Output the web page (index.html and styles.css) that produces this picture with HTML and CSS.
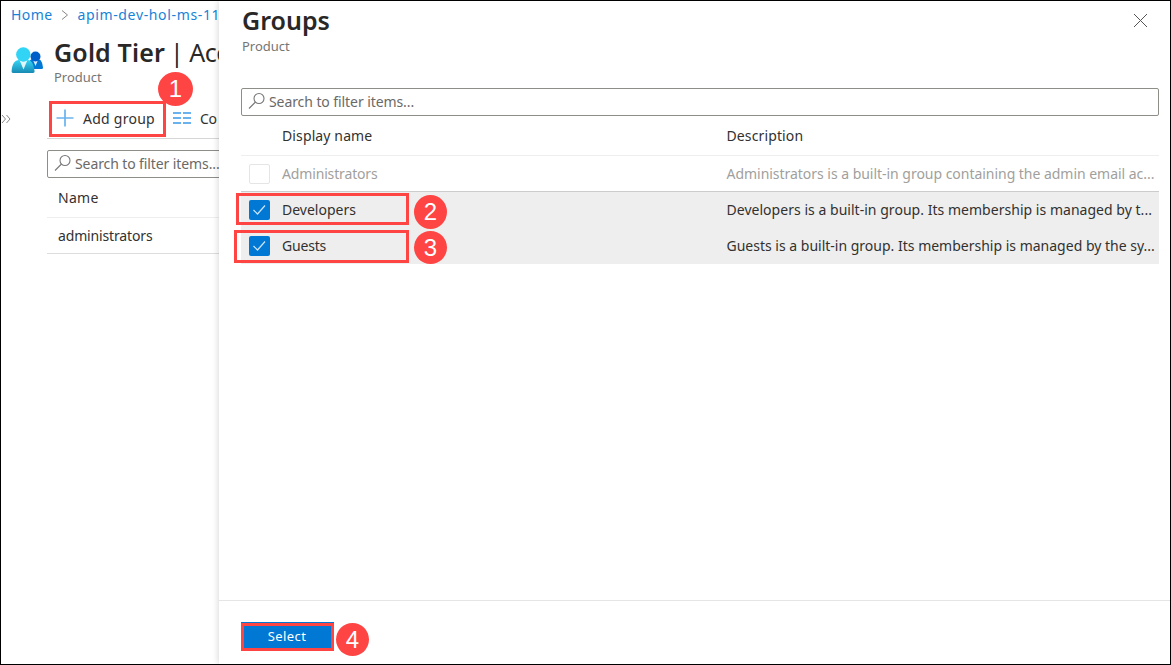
FILE: index.html
```html
<!DOCTYPE html>
<html lang="en">
<head>
<meta charset="utf-8">
<title>Groups</title>
<link rel="stylesheet" href="styles.css">
</head>
<body>
<div class="portal">
  <main class="blade">
    <nav class="breadcrumb"><a>Home</a><svg class="crumb-arrow" width="8" height="10" viewBox="0 0 8 10"><path d="M1 .5 6.500 5 1 9.500"/></svg><a class="crumb-service">apim-dev-hol-ms-11</a></nav>
    <header class="blade-header">
      <svg class="people" width="33" height="28" viewBox="0 0 33 28">
        <defs><linearGradient id="front" x1="0" y1="0" x2="0" y2="1"><stop offset="0" stop-color="#32d4f5"/><stop offset="1" stop-color="#198ab3"/></linearGradient></defs>
        <path d="M18 22h12.500q1.700 0 1.500-1.500c-.6-5-2-8.500-5.500-8.500h-5q-3 0-3.500 5z" fill="#0078d4"/>
        <path d="M22 13l2.500 6 2.500-6q-2.500 1.500-5 0z" fill="#d9ecfb"/>
        <circle cx="24.500" cy="9.500" r="5" fill="#005ec8"/>
        <path d="M2 26h20q1.800 0 1.600-1.800C22.800 17 20.500 13 17 13H8C3.500 13 1.200 17 .6 24.200Q.4 26 2 26z" fill="url(#front)"/>
        <path d="M8.500 13l4 9.500 4-9.500q-4 2.500-8 0z" fill="#fff" opacity=".85"/>
        <circle cx="12.300" cy="7.500" r="7.200" fill="#32d4f5"/>
      </svg>
      <div>
        <h1 class="title"><b>Gold Tier</b><span class="title-section">| Acc</span></h1>
        <p class="subtitle">Product</p>
      </div>
    </header>
    <div class="blade-body">
      <span class="expand"><svg width="10" height="10" viewBox="0 0 10 10"><path d="M1 1l3.500 4L1 9M5.500 1 9 5 5.500 9"/></svg></span>
      <div class="content">
        <div class="toolbar">
          <div class="add-group"><svg width="18" height="18" viewBox="0 0 18 18"><path d="M9 .5v17M.5 9h17"/></svg><span>Add group</span></div>
          <svg class="columns" width="18" height="12" viewBox="0 0 18 12"><path d="M0 1h8M10 1h8M0 6h8M10 6h8M0 11h8M10 11h8"/></svg>
          <span class="columns-label">Co</span>
        </div>
        <div class="search blade-search"><svg class="magnifier" width="18" height="18" viewBox="0 0 18 18"><circle cx="11" cy="6.500" r="5"/><path d="M7.500 10 1 16.500"/></svg><span>Search to filter items...</span></div>
        <div class="name-head">Name</div>
        <div class="name-row">administrators</div>
      </div>
    </div>
  </main>
  <aside class="panel">
    <header class="panel-header">
      <div><h2 class="panel-title">Groups</h2><p class="subtitle">Product</p></div>
      <svg class="close" width="15" height="15" viewBox="0 0 15 15"><path d="M1 1l13 13M14 1 1 14"/></svg>
    </header>
    <div class="search"><svg class="magnifier" width="18" height="18" viewBox="0 0 18 18"><circle cx="11" cy="6.500" r="5"/><path d="M7.500 10 1 16.500"/></svg><span>Search to filter items...</span></div>
    <div class="table">
      <div class="row head"><span></span><span>Display name</span><span>Description</span></div>
      <div class="row disabled"><i class="box"></i><span class="c-admin">Administrators</span><span class="d-admin">Administrators is a built-in group containing the admin email ac...</span></div>
      <div class="row selected"><i class="box on"><svg width="21" height="20" viewBox="0 0 21 20"><path d="M4.500 10 8.500 14 16 5.500"/></svg></i><span>Developers</span><span class="d-dev">Developers is a built-in group. Its membership is managed by t...</span></div>
      <div class="row selected"><i class="box on"><svg width="21" height="20" viewBox="0 0 21 20"><path d="M4.500 10 8.500 14 16 5.500"/></svg></i><span class="c-guest">Guests</span><span class="d-guest">Guests is a built-in group. Its membership is managed by the sy...</span></div>
    </div>
    <footer class="panel-footer"><button class="select">Select</button></footer>
  </aside>
  <div class="mark mark-add"></div>
  <div class="mark mark-dev"></div>
  <div class="mark mark-guest"></div>
  <div class="mark mark-select"></div>
  <div class="badge b1">1</div>
  <div class="badge b2">2</div>
  <div class="badge b3">3</div>
  <div class="badge b4">4</div>
</div>
</body>
</html>
```
FILE: styles.css
```css
* { box-sizing: border-box; }
body { margin: 0; font: 14px/20px "Noto Sans", sans-serif; color: #323130; }
h1, h2, p { margin: 0; font-weight: 400; }
svg { display: block; flex: none; fill: none; }
.portal { position: relative; display: flex; width: 1171px; height: 665px; border: 1px solid #000; background: #fff; overflow: hidden; white-space: nowrap; }
.blade { width: 218px; flex: none; overflow: hidden; }
.breadcrumb { display: flex; align-items: center; height: 27px; padding-left: 10px; color: #1683d8; letter-spacing: .4px; }
.crumb-service { letter-spacing: .65px; }
.crumb-arrow { margin: 0 8px 0 9px; stroke: #8a8886; }
.blade-header { display: flex; height: 73px; padding: 8px 0 0 10px; }
.people { margin: 11px 10px 0 0; }
.title { font-size: 25px; line-height: 32px; color: #292827; }
.title b { font-weight: 600; letter-spacing: .15px; }
.title-section { margin-left: 5px; letter-spacing: -.5px; }
.subtitle { font-size: 13px; line-height: 18px; color: #767574; }
.blade-body { display: flex; }
.expand { width: 46px; padding: 13px 0 0 0; flex: none; stroke: #8a8886; }
.content { width: 400px; flex: none; }
.toolbar { display: flex; align-items: center; height: 38px; border-bottom: 1px solid #d6d6d6; }
.add-group { display: flex; align-items: center; width: 126px; padding-left: 9px; gap: 9px; letter-spacing: .25px; }
.add-group span, .columns-label { margin-top: -1px; }
.add-group svg { stroke: #69b2ed; stroke-width: 1.700; margin-top: -3px; }
.columns { stroke: #69b2ed; stroke-width: 2; margin-top: -3px; }
.columns-label { margin-left: 9px; letter-spacing: -.3px; }
.search { display: flex; align-items: center; height: 28px; border: 1px solid #8e8e88; border-radius: 2px; padding-left: 6px; gap: 3px; color: #6b6967; letter-spacing: -.08px; }
.magnifier { stroke: #777; stroke-width: 1.1; margin-top: -3px; }
.blade-search { margin-top: 11px; letter-spacing: -.1px; }
.name-head { height: 40px; padding: 10px 0 0 11px; border-bottom: 1px solid #eee; letter-spacing: .3px; }
.name-row { height: 36px; padding: 8px 0 0 11px; border-bottom: 1px solid #ddd; letter-spacing: -.15px; }
.panel { display: flex; flex-direction: column; flex: 1; min-width: 0; padding: 0 11px 0 22px; box-shadow: -1px 0 6px rgba(0,0,0,.15); background: #fff; z-index: 1; }
.panel-header { display: flex; justify-content: space-between; height: 87px; padding: 3px 0 0 1px; }
.panel-title { font-size: 25px; font-weight: 600; line-height: 33px; color: #292827; }
.close { margin: 9px 11px 0 0; stroke: #555; }
.row { display: grid; grid-template-columns: 41px 444.500px 1fr; align-items: center; height: 36px; padding-right: 3px; }
.head { height: 40px; border-bottom: 1px solid #eee; letter-spacing: .12px; }
.disabled { color: #a19f9d; border-bottom: 1px solid #ccc; }
.selected { background: #eee; }
.c-admin { letter-spacing: -.15px; }
.c-guest { letter-spacing: -.2px; }
.d-admin { letter-spacing: -.03px; }
.d-dev { letter-spacing: .03px; }
.box { display: block; width: 21px; height: 20px; margin-left: 8px; border: 1px solid #e5e5e5; border-radius: 2px; }
.on { border: 0; background: #0078d4; }
.on svg { stroke: #cce5f8; stroke-width: 1.2; }
.panel-footer { margin: auto -11px 0 -22px; height: 64px; border-top: 1px solid #e5e5e5; padding: 21px 22px; }
.select { width: 93px; height: 28px; border: 0; padding: 0 1px 1px 0; background: #0078d4; color: #fff; font: 13px "Noto Sans", sans-serif; letter-spacing: .4px; }
.mark { position: absolute; z-index: 2; border: 3px solid #ff4444; }
.mark-add { left: 48px; top: 100px; width: 117px; height: 36px; }
.mark-dev { left: 235px; top: 192px; width: 173px; height: 32px; }
.mark-guest { left: 233px; top: 229px; width: 175px; height: 33px; }
.mark-select { left: 240px; top: 622px; width: 93px; height: 28px; }
.badge { position: absolute; z-index: 3; width: 33px; height: 33px; border-radius: 50%; background: #ff4444; color: #fff; text-align: center; font: 24px/34px "Liberation Sans", sans-serif; }
.b1 { left: 157px; top: 71px; width: 35px; height: 34px; }
.b2 { left: 413px; top: 194px; height: 34px; }
.b3 { left: 413px; top: 230px; }
.b4 { left: 335px; top: 622px; }
```
